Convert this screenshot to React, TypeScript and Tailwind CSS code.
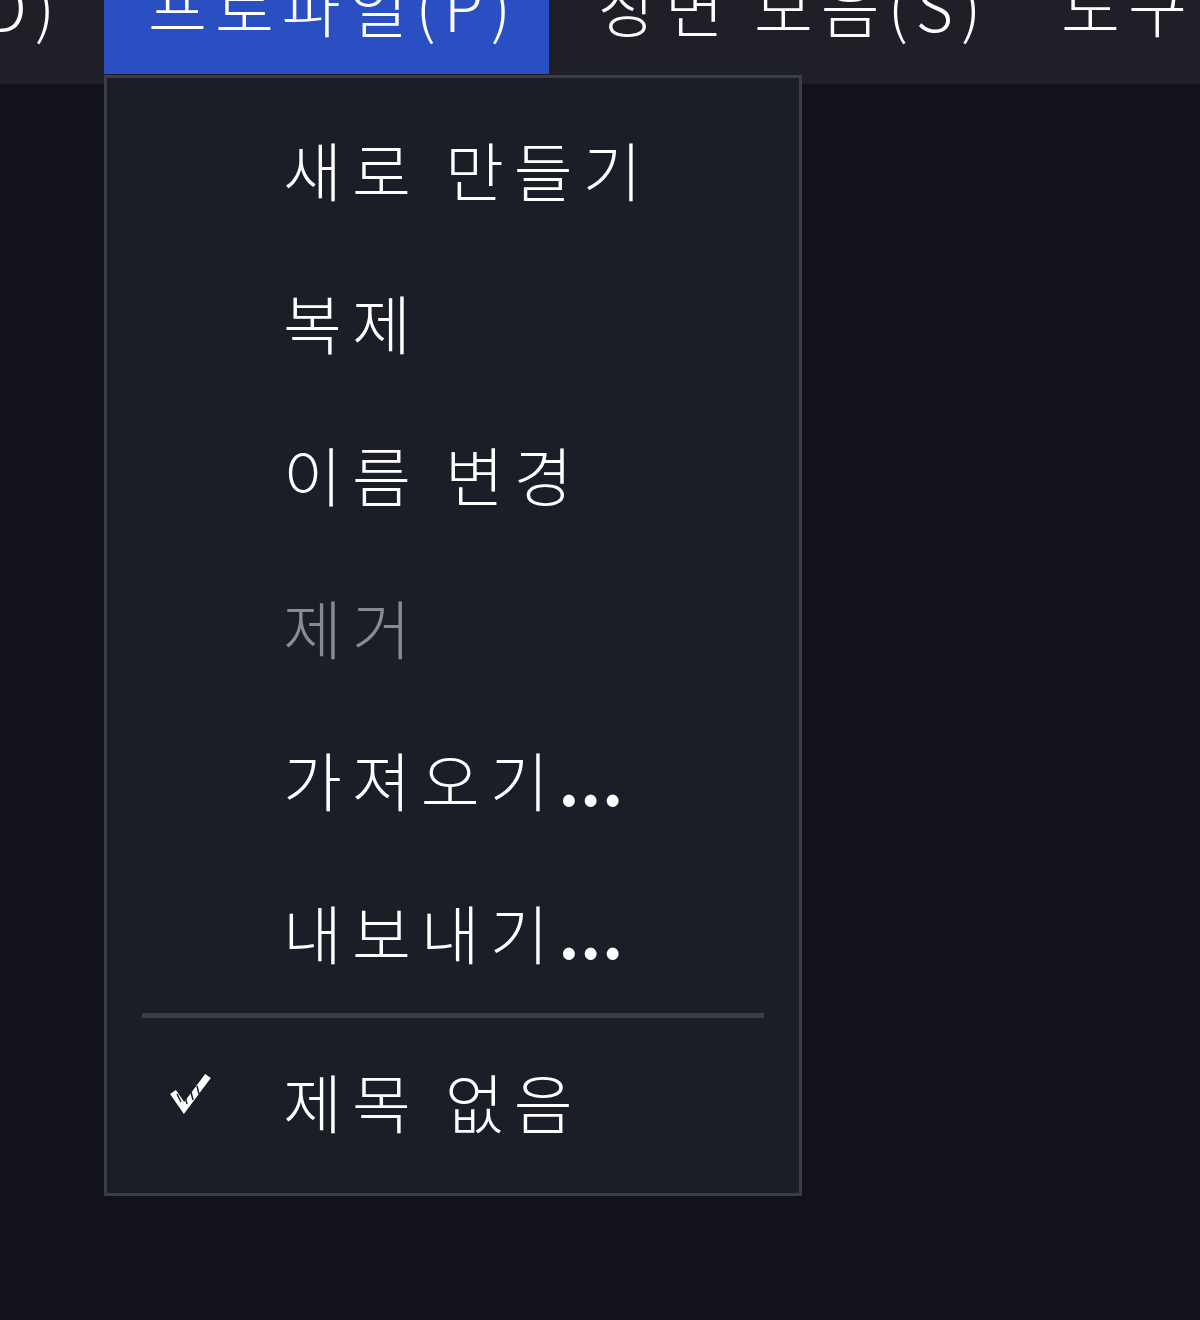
import React from "react";

const font = { fontFamily: '"Noto Sans CJK KR", "Noto Sans", sans-serif' };

function Check() {
  return (
    <svg width="44" height="44" viewBox="0 0 44 44" className="block">
      <path d="M4 20 L15 36 L39 4" fill="none" stroke="#ffffff" strokeWidth="7" strokeLinecap="butt" strokeLinejoin="miter" />
      <path d="M8 22 L12 30 M16 24 L18 32 M22 20 L24 28 M28 14 L30 22" stroke="#1c1e27" strokeWidth="1.5" />
    </svg>
  );
}

const items: { label: string; dots?: boolean; disabled?: boolean }[] = [
  { label: "새로 만들기" },
  { label: "복제" },
  { label: "이름 변경" },
  { label: "제거", disabled: true },
  { label: "가져오기", dots: true },
  { label: "내보내기", dots: true },
];

export default function App() {
  return (
    <div className="w-[1200px] h-[1320px] bg-[#12131a] overflow-hidden flex flex-col" style={font}>
      <div className="h-[84px] bg-[#1e1f27] flex items-start overflow-hidden shrink-0 text-white font-light text-[64px] tracking-[8px]">
        <div className="h-[74px] w-[104px] shrink-0 pr-[49px] flex items-start justify-end overflow-hidden">
          <span className="leading-[64px] -mt-[28px] whitespace-nowrap -mr-[8px]">독(D)</span>
        </div>
        <div className="h-[74px] w-[445px] shrink-0 pl-[44px] bg-[#2a4fc2] flex items-start overflow-hidden">
          <span className="leading-[64px] -mt-[28px] whitespace-nowrap">프로파일(P)</span>
        </div>
        <div className="h-[74px] pl-[49px] pr-[72px] flex items-start shrink-0">
          <span className="leading-[64px] -mt-[28px] whitespace-nowrap">장면 모음(S)</span>
        </div>
        <div className="h-[74px] flex items-start shrink-0">
          <span className="leading-[64px] -mt-[28px] whitespace-nowrap">도구(T)</span>
        </div>
      </div>
      <div className="relative">
        <div className="absolute left-[104px] -top-[9px] w-[698px] h-[1121px] bg-[#1c1e27] border-[3px] border-[#3b3c48] flex flex-col pt-[14px] pb-[9px]">
          {items.map((it) => (
            <div key={it.label} className="h-[152.5px] shrink-0 flex items-center pl-[176px]">
              <span className={`text-[64px] font-light leading-none whitespace-nowrap tracking-[10px] ${it.disabled ? "text-[#8a8b90]" : "text-white"}`}>
                {it.label}
                {it.dots && <span className="tracking-[1px] font-bold">...</span>}
              </span>
            </div>
          ))}
          <div className="mx-[35px] h-[5px] my-[6px] bg-[#3a3c48] shrink-0" />
          <div className="h-[152px] shrink-0 flex items-center relative pl-[176px]">
            <div className="absolute left-[62px] top-[48px]"><Check /></div>
            <span className="text-[64px] font-light leading-none whitespace-nowrap tracking-[10px] text-white">제목 없음</span>
          </div>
        </div>
      </div>
    </div>
  );
}
